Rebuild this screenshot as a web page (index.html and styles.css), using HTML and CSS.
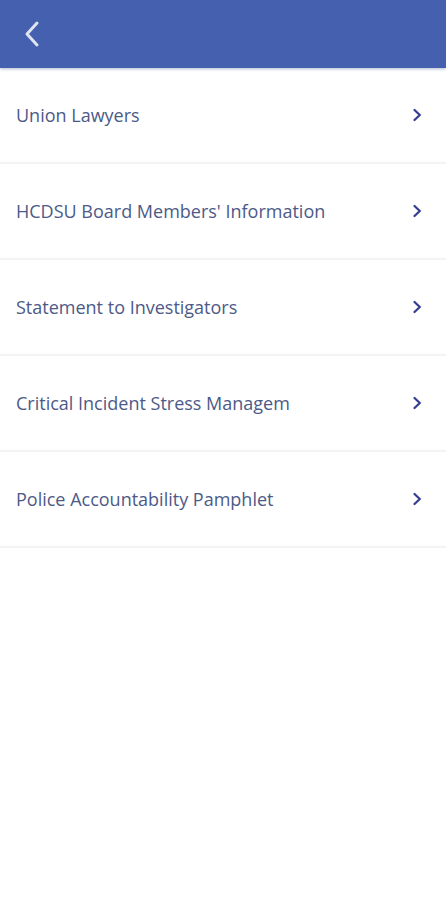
FILE: index.html
```html
<!DOCTYPE html>
<html>
<head>
<meta charset="utf-8">
<link rel="stylesheet" href="styles.css">
</head>
<body>
<header class="topbar">
  <svg class="back" width="20" height="28" viewBox="0 0 20 28"><path d="M15 3 L5 14 L15 25" fill="none" stroke="#dfe4f2" stroke-width="3" stroke-linecap="round" stroke-linejoin="round"/></svg>
</header>
<ul class="list">
  <li class="row"><span class="label">Union Lawyers</span><svg class="chev" width="10" height="14" viewBox="0 0 10 14"><path d="M2.5 2 L7.8 7 L2.5 12" fill="none" stroke="#34408f" stroke-width="2.3" stroke-linecap="round" stroke-linejoin="round"/></svg></li>
  <li class="row"><span class="label">HCDSU Board Members' Information</span><svg class="chev" width="10" height="14" viewBox="0 0 10 14"><path d="M2.5 2 L7.8 7 L2.5 12" fill="none" stroke="#34408f" stroke-width="2.3" stroke-linecap="round" stroke-linejoin="round"/></svg></li>
  <li class="row"><span class="label">Statement to Investigators</span><svg class="chev" width="10" height="14" viewBox="0 0 10 14"><path d="M2.5 2 L7.8 7 L2.5 12" fill="none" stroke="#34408f" stroke-width="2.3" stroke-linecap="round" stroke-linejoin="round"/></svg></li>
  <li class="row"><span class="label">Critical Incident Stress Managem</span><svg class="chev" width="10" height="14" viewBox="0 0 10 14"><path d="M2.5 2 L7.8 7 L2.5 12" fill="none" stroke="#34408f" stroke-width="2.3" stroke-linecap="round" stroke-linejoin="round"/></svg></li>
  <li class="row"><span class="label">Police Accountability Pamphlet</span><svg class="chev" width="10" height="14" viewBox="0 0 10 14"><path d="M2.5 2 L7.8 7 L2.5 12" fill="none" stroke="#34408f" stroke-width="2.3" stroke-linecap="round" stroke-linejoin="round"/></svg></li>
</ul>
</body>
</html>
```
FILE: styles.css
```css
html, body {
  margin: 0;
  padding: 0;
  background: #ffffff;
  font-family: "Open Sans", "Noto Sans", sans-serif;
}
.topbar {
  height: 68px;
  background: #4560ae;
  display: flex;
  align-items: center;
  padding-left: 22px;
  box-shadow: 0 1px 3px rgba(40, 60, 120, 0.35);
  position: relative;
  z-index: 1;
}
.back {
  display: block;
}
.list {
  list-style: none;
  margin: 0;
  padding: 0;
}
.row {
  height: 94px;
  border-bottom: 2px solid #f3f3f4;
  display: flex;
  align-items: center;
  justify-content: space-between;
  padding: 0 24px 0 16px;
}
.label {
  font-size: 18px;
  color: #4c5a88;
}
.chev {
  display: block;
}
```
